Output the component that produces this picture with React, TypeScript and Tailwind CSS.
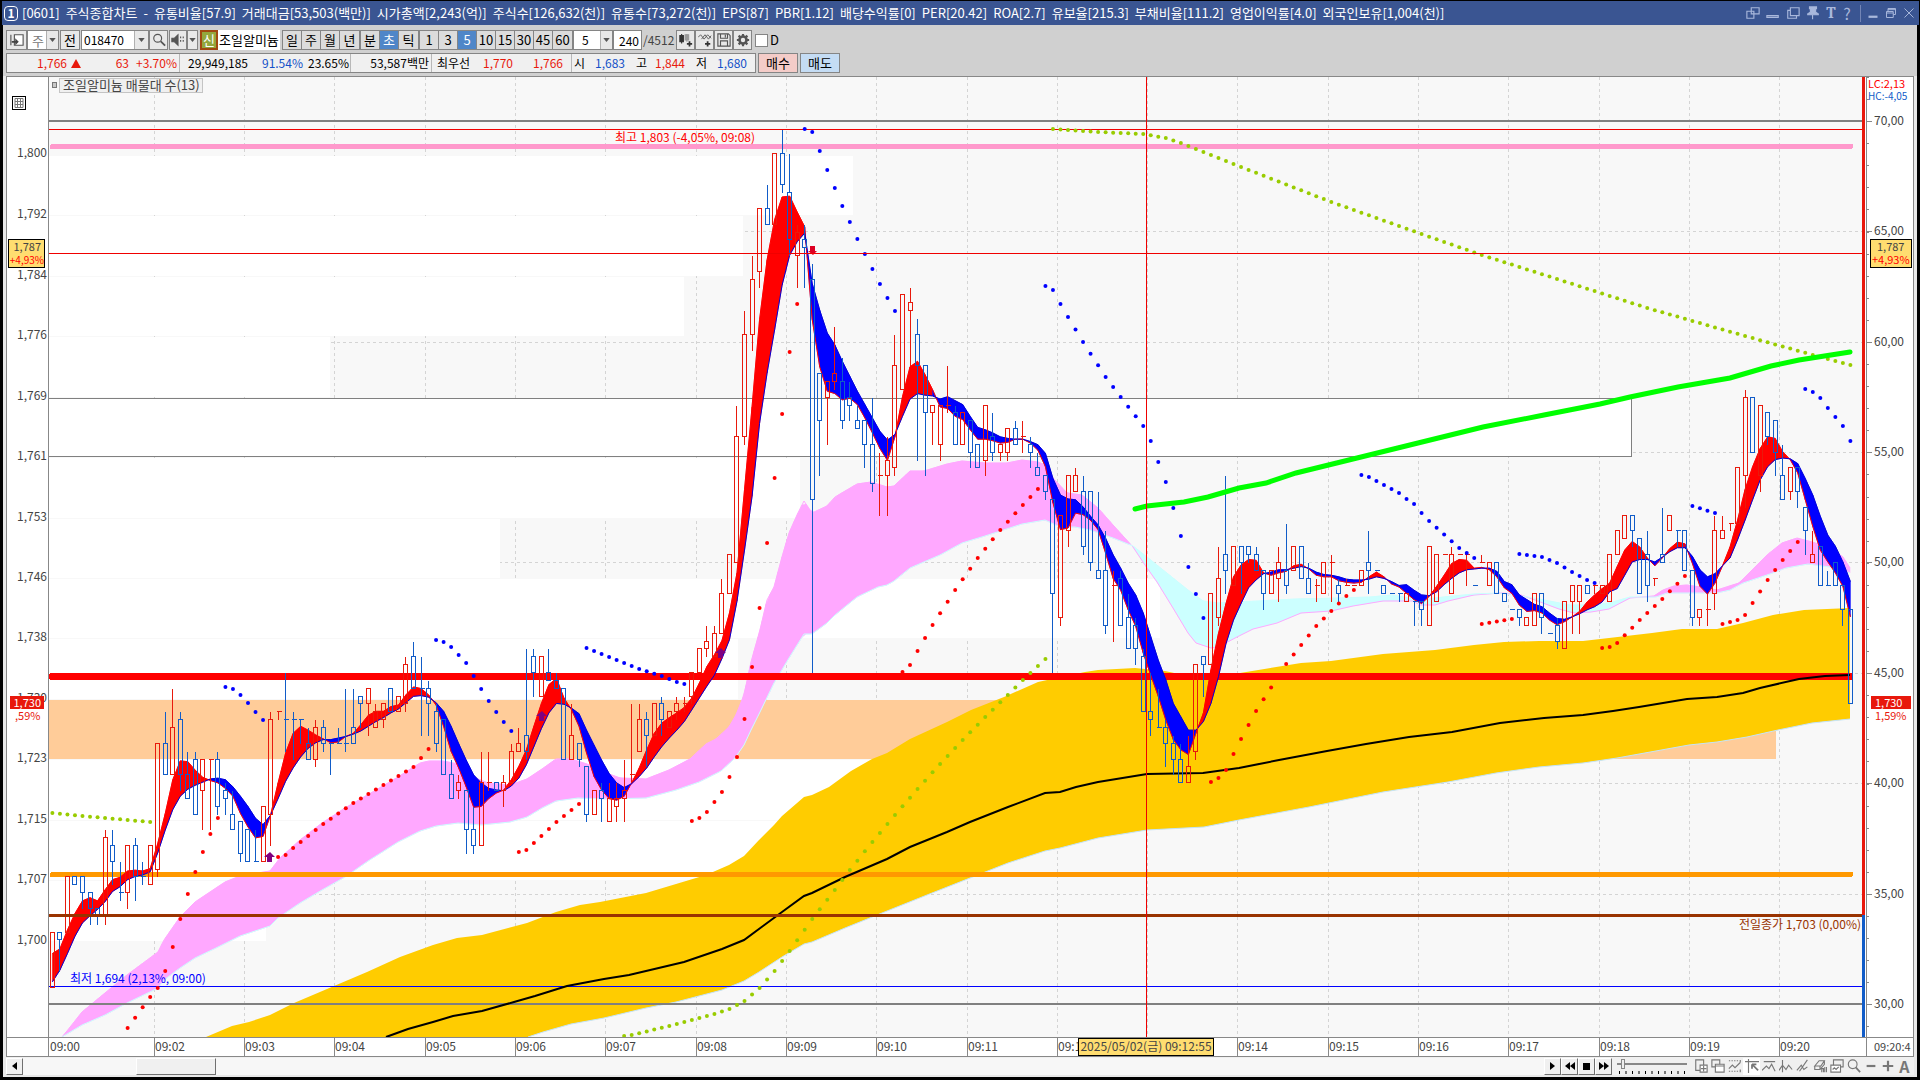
import type { ReactNode } from "react";

type Pt = [number, number];
type Candle = ["r" | "b", number, number, number, number];

const STEP = 7.523;
const X0 = 52.4;
const cx = (i: number) => X0 + i * STEP;
const py = (price: number) => 129.3 + (1803 - price) * 7.865;

// [colour, high, body top, body bottom, low], one bar every 5 seconds
const candles: Candle[] = [
    ["r", 1701, 1701, 1694, 1694], ["b", 1701, 1701, 1700, 1696], ["r", 1708, 1708, 1701, 1701], ["b", 1708, 1708, 1707, 1707],
    ["b", 1708, 1708, 1706, 1704], ["b", 1706, 1706, 1704, 1702], ["b", 1704, 1704, 1703, 1702], ["r", 1714, 1713, 1703, 1702],
    ["b", 1714, 1712, 1710, 1707], ["b", 1710, 1706, 1706, 1705], ["r", 1712, 1712, 1706, 1704], ["b", 1713, 1712, 1708, 1705],
    ["b", 1710, 1708, 1708, 1707], ["r", 1712, 1712, 1707, 1707], ["r", 1725, 1725, 1709, 1708], ["b", 1729, 1725, 1721, 1721],
    ["r", 1732, 1727, 1721, 1721], ["b", 1729, 1728, 1721, 1719], ["b", 1724, 1721, 1718, 1718], ["b", 1724, 1723, 1716, 1716],
    ["r", 1723, 1723, 1719, 1714], ["r", 1723, 1723, 1723, 1714], ["b", 1724, 1723, 1717, 1716], ["b", 1720, 1719, 1718, 1716],
    ["b", 1719, 1716, 1714, 1714], ["b", 1715, 1715, 1711, 1710], ["b", 1714, 1714, 1710, 1710], ["b", 1714, 1710, 1710, 1710],
    ["r", 1717, 1717, 1710, 1710], ["r", 1729, 1728, 1716, 1712], ["r", 1729, 1729, 1729, 1728], ["b", 1734, 1728, 1728, 1724],
    ["b", 1729, 1728, 1728, 1723], ["b", 1728, 1728, 1728, 1725], ["b", 1727, 1725, 1723, 1723], ["r", 1728, 1727, 1723, 1722],
    ["b", 1728, 1727, 1725, 1724], ["b", 1725, 1725, 1725, 1721], ["b", 1727, 1725, 1725, 1725], ["b", 1732, 1725, 1725, 1724],
    ["b", 1732, 1727, 1725, 1725], ["b", 1731, 1731, 1730, 1727], ["r", 1732, 1732, 1730, 1726], ["r", 1730, 1729, 1727, 1727],
    ["r", 1730, 1730, 1728, 1727], ["b", 1732, 1732, 1729, 1729], ["r", 1731, 1731, 1729, 1729], ["r", 1736, 1735, 1730, 1729],
    ["b", 1738, 1736, 1732, 1732], ["b", 1736, 1732, 1732, 1726], ["b", 1733, 1732, 1730, 1726], ["b", 1730, 1729, 1725, 1724],
    ["b", 1728, 1728, 1721, 1721], ["b", 1723, 1721, 1718, 1718], ["r", 1721, 1720, 1719, 1718], ["b", 1719, 1719, 1714, 1711],
    ["b", 1717, 1714, 1712, 1711], ["r", 1724, 1720, 1712, 1712], ["r", 1724, 1720, 1720, 1719], ["b", 1720, 1720, 1719, 1719],
    ["r", 1721, 1720, 1719, 1717], ["r", 1725, 1724, 1720, 1720], ["r", 1727, 1725, 1724, 1724], ["b", 1737, 1726, 1724, 1723],
    ["b", 1737, 1736, 1734, 1731], ["r", 1736, 1736, 1731, 1731], ["b", 1737, 1734, 1733, 1733], ["b", 1734, 1733, 1732, 1732],
    ["b", 1732, 1732, 1723, 1723], ["r", 1730, 1726, 1723, 1723], ["b", 1725, 1725, 1723, 1722], ["b", 1722, 1722, 1716, 1715],
    ["r", 1719, 1719, 1716, 1716], ["b", 1720, 1719, 1718, 1715], ["r", 1720, 1718, 1715, 1715], ["r", 1720, 1718, 1717, 1715],
    ["r", 1723, 1719, 1718, 1715], ["r", 1730, 1721, 1721, 1720], ["r", 1730, 1728, 1724, 1724], ["b", 1729, 1728, 1726, 1722],
    ["r", 1730, 1730, 1726, 1726], ["b", 1731, 1730, 1728, 1726], ["r", 1729, 1729, 1727, 1727], ["r", 1731, 1730, 1729, 1728],
    ["r", 1731, 1730, 1730, 1729], ["r", 1734, 1734, 1731, 1730], ["r", 1737, 1737, 1734, 1734], ["r", 1740, 1738, 1737, 1736],
    ["r", 1740, 1739, 1736, 1736], ["r", 1746, 1744, 1739, 1739], ["r", 1749, 1749, 1744, 1744], ["r", 1768, 1764, 1748, 1748],
    ["r", 1780, 1777, 1764, 1763], ["r", 1787, 1784, 1777, 1775], ["r", 1793, 1793, 1785, 1783], ["b", 1796, 1793, 1791, 1791],
    ["r", 1800, 1800, 1791, 1791], ["b", 1803, 1800, 1796, 1795], ["b", 1800, 1795, 1789, 1787], ["r", 1791, 1790, 1787, 1783],
    ["b", 1791, 1789, 1788, 1783], ["b", 1786, 1784, 1756, 1734], ["b", 1772, 1772, 1766, 1759], ["r", 1771, 1771, 1769, 1763],
    ["r", 1778, 1772, 1771, 1770], ["b", 1774, 1771, 1766, 1765], ["b", 1771, 1769, 1768, 1766], ["b", 1768, 1766, 1765, 1765],
    ["b", 1766, 1766, 1763, 1760], ["b", 1769, 1763, 1758, 1757], ["r", 1762, 1759, 1759, 1754], ["r", 1764, 1761, 1759, 1754],
    ["r", 1777, 1773, 1760, 1759], ["r", 1782, 1782, 1770, 1770], ["r", 1783, 1781, 1780, 1773], ["b", 1779, 1777, 1773, 1761],
    ["b", 1773, 1773, 1767, 1759], ["r", 1768, 1768, 1767, 1763], ["r", 1768, 1768, 1763, 1761], ["r", 1773, 1768, 1768, 1767],
    ["b", 1768, 1767, 1763, 1763], ["r", 1767, 1767, 1763, 1763], ["b", 1766, 1766, 1762, 1760], ["b", 1763, 1763, 1760, 1760],
    ["r", 1768, 1768, 1761, 1759], ["b", 1767, 1764, 1762, 1761], ["r", 1763, 1763, 1762, 1761], ["r", 1765, 1765, 1762, 1761],
    ["b", 1766, 1765, 1763, 1763], ["r", 1766, 1764, 1764, 1762], ["b", 1764, 1763, 1762, 1760], ["b", 1762, 1760, 1759, 1759],
    ["b", 1759, 1759, 1757, 1756], ["b", 1756, 1756, 1744, 1734], ["r", 1754, 1754, 1741, 1740], ["r", 1759, 1759, 1752, 1750],
    ["r", 1760, 1759, 1757, 1757], ["b", 1759, 1757, 1750, 1749], ["b", 1757, 1757, 1748, 1747], ["b", 1757, 1747, 1746, 1746],
    ["b", 1752, 1747, 1740, 1739], ["r", 1747, 1745, 1745, 1738], ["b", 1747, 1746, 1740, 1740], ["b", 1744, 1741, 1737, 1737],
    ["b", 1741, 1740, 1737, 1735], ["b", 1737, 1736, 1729, 1729], ["b", 1734, 1729, 1728, 1726], ["b", 1732, 1727, 1727, 1727],
    ["b", 1728, 1727, 1725, 1722], ["b", 1726, 1725, 1723, 1721], ["b", 1725, 1723, 1720, 1720], ["r", 1726, 1722, 1720, 1720],
    ["r", 1735, 1735, 1724, 1723], ["b", 1736, 1736, 1735, 1731], ["r", 1744, 1744, 1735, 1735], ["r", 1750, 1746, 1741, 1740],
    ["b", 1759, 1749, 1747, 1744], ["r", 1750, 1750, 1745, 1745], ["b", 1750, 1750, 1748, 1744], ["b", 1750, 1750, 1749, 1748],
    ["b", 1750, 1749, 1747, 1747], ["b", 1747, 1747, 1744, 1742], ["r", 1747, 1747, 1744, 1744], ["r", 1750, 1748, 1746, 1743],
    ["b", 1753, 1747, 1745, 1744], ["r", 1750, 1750, 1747, 1747], ["b", 1750, 1750, 1746, 1746], ["b", 1748, 1746, 1744, 1744],
    ["r", 1746, 1745, 1745, 1743], ["r", 1748, 1748, 1744, 1744], ["r", 1749, 1748, 1748, 1743], ["b", 1746, 1745, 1744, 1743],
    ["r", 1746, 1745, 1745, 1745], ["r", 1745, 1745, 1745, 1745], ["r", 1747, 1747, 1745, 1745], ["b", 1752, 1748, 1747, 1744],
    ["b", 1747, 1747, 1747, 1747], ["b", 1745, 1745, 1744, 1744], ["b", 1744, 1744, 1744, 1744], ["b", 1744, 1744, 1744, 1743],
    ["r", 1744, 1744, 1743, 1743], ["b", 1743, 1743, 1743, 1740], ["b", 1743, 1743, 1742, 1740], ["r", 1750, 1750, 1740, 1740],
    ["r", 1749, 1749, 1743, 1743], ["r", 1749, 1749, 1749, 1749], ["r", 1750, 1749, 1744, 1744], ["r", 1749, 1749, 1749, 1749],
    ["r", 1749, 1749, 1749, 1745], ["b", 1745, 1745, 1745, 1745], ["r", 1749, 1748, 1748, 1748], ["r", 1748, 1748, 1745, 1745],
    ["b", 1748, 1748, 1744, 1744], ["b", 1744, 1744, 1743, 1743], ["b", 1742, 1742, 1742, 1742], ["b", 1742, 1742, 1741, 1740],
    ["r", 1741, 1741, 1740, 1740], ["r", 1744, 1744, 1740, 1740], ["b", 1744, 1744, 1741, 1739], ["b", 1739, 1739, 1739, 1739],
    ["b", 1741, 1740, 1738, 1737], ["r", 1743, 1743, 1737, 1737], ["r", 1745, 1745, 1743, 1739], ["r", 1745, 1745, 1743, 1739],
    ["b", 1745, 1745, 1744, 1744], ["r", 1745, 1745, 1745, 1744], ["r", 1745, 1745, 1744, 1744], ["r", 1749, 1749, 1743, 1743],
    ["r", 1752, 1752, 1749, 1749], ["r", 1754, 1754, 1751, 1751], ["b", 1754, 1754, 1752, 1750], ["b", 1751, 1751, 1744, 1744],
    ["b", 1752, 1749, 1745, 1743], ["r", 1746, 1746, 1746, 1745], ["b", 1755, 1749, 1748, 1748], ["r", 1754, 1754, 1752, 1752],
    ["b", 1752, 1752, 1752, 1750], ["b", 1752, 1752, 1747, 1747], ["b", 1747, 1747, 1741, 1740], ["r", 1742, 1742, 1741, 1740],
    ["r", 1744, 1742, 1742, 1740], ["r", 1754, 1752, 1744, 1742], ["r", 1754, 1752, 1751, 1751], ["r", 1753, 1753, 1753, 1752],
    ["r", 1760, 1760, 1753, 1753], ["r", 1770, 1769, 1759, 1755], ["b", 1769, 1769, 1762, 1762], ["r", 1768, 1768, 1759, 1757],
    ["b", 1767, 1767, 1764, 1763], ["b", 1766, 1766, 1762, 1759], ["b", 1763, 1759, 1756, 1756], ["r", 1760, 1760, 1757, 1756],
    ["b", 1760, 1760, 1757, 1755], ["b", 1755, 1755, 1752, 1749], ["r", 1752, 1749, 1748, 1748], ["b", 1750, 1750, 1745, 1745],
    ["b", 1747, 1745, 1745, 1745], ["b", 1748, 1748, 1745, 1745], ["b", 1745, 1745, 1742, 1740], ["b", 1742, 1742, 1730, 1730],
];

// moving averages, one value per bar
const fast = [
    1698.2, 1698.8, 1701.2, 1703.3, 1704.9, 1705.3, 1704.9, 1706.3, 1707.6, 1707.9, 1708.7, 1708.8, 1708.7, 1709, 1712.2, 1716,
    1720.3, 1722.7, 1722.6, 1721.5, 1720.6, 1720.2, 1719.9, 1719.2, 1718.2, 1716, 1714.3, 1712.9, 1713.1, 1715.8, 1719.9, 1723.7,
    1726.2, 1727.1, 1726.6, 1726, 1725.5, 1725, 1725.1, 1725.8, 1726.2, 1727.3, 1728.5, 1729, 1729, 1729.6, 1729.8, 1731.1,
    1732.1, 1731.9, 1731.1, 1729.8, 1727.1, 1723.9, 1721.8, 1719.4, 1716.8, 1716.9, 1717.9, 1718.6, 1719, 1720.3, 1722, 1724.1,
    1727.1, 1730, 1732.4, 1733.2, 1730.7, 1729.2, 1727.1, 1723.7, 1720.7, 1719, 1717.9, 1717.7, 1718.2, 1719.9, 1721.8, 1724.1,
    1726.2, 1727.5, 1728.2, 1728.8, 1729.5, 1730.7, 1732.6, 1734.7, 1736.2, 1738, 1741.5, 1746.6, 1757.2, 1767.7, 1778.8, 1786.4,
    1791.5, 1794.4, 1794.5, 1792.5, 1790.6, 1778.8, 1772.8, 1769.7, 1769.4, 1768.6, 1768.8, 1768, 1766.3, 1764.4, 1762.4, 1760.9,
    1763.9, 1769, 1772.8, 1773.5, 1771.8, 1769.9, 1767.7, 1767.5, 1766.5, 1766.1, 1764.8, 1763.6, 1763.6, 1763.4, 1763.1, 1763.2,
    1763.6, 1763.6, 1763.1, 1762.2, 1760.1, 1755.5, 1752.1, 1752.3, 1754.2, 1754, 1753.3, 1752.1, 1749.1, 1745.9, 1744.4, 1741.9,
    1739.8, 1736.4, 1733.6, 1730.9, 1727.9, 1725.4, 1724.1, 1723.5, 1726.2, 1728.8, 1734.3, 1738.9, 1742.7, 1746.1, 1747.6, 1748.3,
    1748.2, 1746.6, 1746.3, 1746.6, 1746.8, 1747.5, 1747.7, 1747.1, 1746.3, 1746.1, 1746.1, 1745.6, 1745.4, 1745.3, 1745.4, 1746.1,
    1746.7, 1746.1, 1745.2, 1744.8, 1744, 1743.2, 1742.7, 1743.6, 1744.9, 1746.3, 1747.8, 1748.3, 1748.2, 1747.2, 1747.3, 1747,
    1746.1, 1744.7, 1744, 1742.5, 1741.7, 1741.8, 1741.5, 1740.6, 1740, 1740.4, 1741, 1741.7, 1742.9, 1743.8, 1744.6, 1745.3,
    1747.4, 1749.5, 1750.6, 1749.9, 1748.5, 1747.5, 1748.5, 1749.7, 1750.5, 1750.3, 1747.8, 1744.9, 1743.9, 1745.3, 1747.5, 1749.9,
    1753.3, 1757.2, 1760.1, 1762.4, 1763.9, 1763.7, 1762, 1761, 1759.3, 1755.9, 1752.5, 1749.5, 1748, 1746.6, 1744.9, 1741,
];
const slow = [
    1694.6, 1696.1, 1698.2, 1700.4, 1702.1, 1703, 1703.8, 1704.8, 1706.1, 1706.7, 1707.6, 1708, 1708.2, 1708.6, 1711, 1713.9,
    1716.5, 1718.2, 1719.1, 1719.6, 1720, 1720.4, 1720.5, 1720.3, 1719.4, 1718.2, 1716.9, 1715.4, 1714.6, 1715.8, 1717.9, 1720.1,
    1721.8, 1723.2, 1724.3, 1725, 1725.4, 1725.4, 1725.6, 1725.8, 1726.1, 1726.5, 1727.1, 1727.7, 1728.2, 1728.8, 1729.3, 1730.1,
    1730.9, 1731, 1730.8, 1730.1, 1729, 1727.1, 1724.9, 1722.8, 1720.9, 1719.9, 1719.2, 1719, 1718.9, 1719.5, 1720.5, 1722.2,
    1724.5, 1726.8, 1728.8, 1730, 1729.9, 1729.4, 1728.7, 1726.6, 1724.7, 1722.8, 1721.1, 1719.9, 1719.3, 1719.8, 1720.7, 1721.8,
    1723.2, 1724.5, 1725.6, 1726.6, 1727.7, 1729.2, 1730.7, 1732.2, 1733.6, 1735.7, 1738.1, 1743, 1749.5, 1756.3, 1765.6, 1772,
    1777.5, 1783.2, 1787, 1788.7, 1789.8, 1783.4, 1780, 1777.1, 1775.6, 1773.5, 1771.6, 1769.7, 1768, 1766.3, 1764.6, 1763.5,
    1764.2, 1766.5, 1768.7, 1769.4, 1769.2, 1769.1, 1768.7, 1769, 1768.5, 1768, 1766.5, 1765.1, 1764.8, 1764.4, 1763.9, 1763.7,
    1763.6, 1763.6, 1763.3, 1762.9, 1761.8, 1758.6, 1756.5, 1756, 1755.9, 1755, 1753.8, 1752.7, 1751, 1748.9, 1747.2, 1745.3,
    1743.8, 1741.5, 1738.5, 1735.5, 1733, 1730, 1728.3, 1726.6, 1726.6, 1727.7, 1730, 1733.4, 1737.6, 1740.6, 1742.7, 1744.7,
    1745.7, 1746.5, 1746.7, 1747, 1747, 1747.2, 1747.4, 1747.2, 1746.7, 1746.4, 1746.3, 1746.1, 1745.8, 1745.7, 1745.7, 1745.8,
    1746.1, 1745.9, 1745.5, 1745, 1745.1, 1744.4, 1743.8, 1743.7, 1744.2, 1745.1, 1745.9, 1746.6, 1747, 1747.1, 1747.2, 1747.2,
    1746.8, 1745.5, 1745.1, 1743.8, 1743.2, 1742.6, 1742.3, 1741.5, 1740.8, 1740.7, 1741, 1741.4, 1741.9, 1742.3, 1742.9, 1744.2,
    1744.6, 1746.3, 1748, 1748.3, 1748.3, 1748, 1748.6, 1749.3, 1749.8, 1749.8, 1748.7, 1747, 1746.1, 1746.5, 1747.5, 1748.5,
    1750.8, 1753.3, 1755.9, 1758.4, 1760.1, 1761, 1761.2, 1761.1, 1760.5, 1758.6, 1756.5, 1753.8, 1751.4, 1750, 1748, 1745.5,
];

const cloudA: Pt[] = [
    [62, 1037], [67, 1031], [82, 1012], [105, 993], [127, 975], [158, 952], [164, 940], [180, 917], [195, 902], [210, 892], [225, 882],
    [240, 876], [270, 871], [280, 858], [300, 840], [322, 823], [345, 808], [376, 790], [398, 777], [420, 763], [429, 761], [443, 761],
    [458, 764], [473, 777], [488, 783], [510, 785], [527, 779], [542, 769], [556, 759], [571, 759], [587, 764], [601, 771], [620, 778],
    [646, 779], [669, 770], [690, 759], [706, 744], [716, 739], [729, 727], [736, 715], [744, 695], [751, 662], [760, 630], [767, 600],
    [774, 587], [782, 557], [789, 533], [797, 515], [804, 501], [812, 513], [827, 506], [835, 497], [857, 484], [871, 482], [887, 487],
    [894, 486], [910, 471], [924, 471], [947, 464], [962, 461], [985, 463], [1007, 463], [1022, 460], [1038, 462], [1045, 465],
    [1053, 478], [1067, 493], [1082, 495], [1098, 508], [1113, 525], [1133, 547], [1145, 565], [1157, 582], [1173, 608], [1188, 633],
    [1196, 643], [1211, 648], [1218, 647], [1237, 637], [1253, 629], [1277, 623], [1301, 613], [1331, 611], [1353, 606], [1383, 601],
    [1413, 601], [1420, 605], [1435, 605], [1448, 601], [1474, 595], [1500, 593], [1518, 594], [1535, 600], [1559, 609], [1574, 613],
    [1591, 612], [1609, 609], [1630, 598], [1654, 596], [1663, 590], [1674, 586], [1687, 585], [1700, 587], [1717, 590], [1739, 583],
    [1752, 570], [1767, 555], [1782, 543], [1797, 538], [1812, 542], [1830, 548], [1843, 557], [1850, 568],
];
const cloudB: Pt[] = [
    [62, 1037], [82, 1025], [105, 1015], [127, 1003], [158, 988], [164, 980], [180, 968], [195, 958], [216, 948], [240, 936], [270, 926],
    [278, 918], [300, 903], [322, 890], [345, 877], [368, 861], [398, 842], [420, 831], [436, 826], [458, 823], [481, 825], [510, 822],
    [527, 817], [542, 808], [556, 801], [578, 798], [604, 799], [646, 798], [676, 790], [699, 782], [721, 771], [735, 758], [744, 745],
    [751, 730], [760, 712], [774, 683], [789, 658], [804, 634], [812, 634], [827, 623], [835, 615], [857, 597], [878, 587], [887, 585],
    [894, 581], [910, 568], [940, 555], [962, 543], [985, 536], [1022, 524], [1045, 520], [1060, 527], [1075, 527], [1090, 530],
    [1113, 538], [1133, 546], [1147, 557], [1173, 578], [1188, 590], [1203, 601], [1218, 603], [1239, 602], [1296, 599], [1340, 598],
    [1370, 597], [1392, 595], [1409, 598], [1426, 599], [1444, 597], [1474, 594], [1500, 593], [1522, 596], [1544, 600], [1570, 605],
    [1596, 605], [1613, 602], [1630, 597], [1656, 597], [1667, 593], [1717, 593], [1730, 590], [1743, 583], [1767, 575], [1786, 568],
    [1808, 564], [1830, 567], [1850, 573],
];
const bandTop: Pt[] = [
    [206, 1037], [232, 1026], [249, 1022], [270, 1015], [294, 1003], [327, 989], [367, 972], [400, 957], [433, 945], [457, 938],
    [482, 935], [527, 923], [556, 912], [580, 905], [600, 902], [646, 893], [676, 884], [706, 875], [729, 865], [744, 856], [759, 840],
    [774, 825], [782, 816], [804, 797], [812, 795], [829, 787], [851, 771], [872, 759], [887, 753], [910, 739], [947, 722], [971, 710],
    [1004, 697], [1038, 682], [1061, 677], [1085, 672], [1098, 670], [1135, 668], [1165, 671], [1188, 676], [1240, 673], [1301, 663],
    [1331, 661], [1383, 654], [1435, 650], [1474, 645], [1504, 642], [1539, 641], [1583, 641], [1609, 638], [1652, 633], [1682, 629],
    [1717, 629], [1743, 623], [1773, 615], [1804, 610], [1850, 608],
];
const bandBottom: Pt[] = [
    [528, 1037], [543, 1032], [571, 1024], [604, 1018], [646, 1008], [676, 1002], [699, 996], [722, 990], [744, 981], [759, 972],
    [782, 957], [804, 944], [812, 942], [845, 928], [887, 911], [927, 895], [970, 878], [1008, 863], [1045, 851], [1060, 848],
    [1098, 838], [1147, 830], [1204, 827], [1239, 820], [1309, 807], [1383, 792], [1448, 782], [1496, 773], [1539, 767], [1583, 763],
    [1617, 758], [1689, 745], [1717, 742], [1747, 737], [1778, 730], [1812, 723], [1850, 719],
];
const bandMid: Pt[] = [
    [386, 1037], [408, 1029], [433, 1022], [453, 1016], [482, 1011], [514, 1002], [535, 996], [567, 986], [604, 979], [629, 975],
    [646, 971], [684, 962], [722, 949], [744, 940], [763, 926], [782, 912], [804, 896], [812, 893], [845, 877], [887, 859], [910, 847],
    [947, 832], [970, 822], [1008, 807], [1045, 793], [1060, 792], [1076, 787], [1098, 782], [1147, 774], [1203, 773], [1239, 768],
    [1279, 760], [1327, 751], [1366, 744], [1409, 737], [1452, 732], [1500, 723], [1544, 718], [1583, 715], [1613, 711], [1639, 707],
    [1687, 699], [1717, 697], [1743, 693], [1760, 688], [1799, 679], [1825, 676], [1850, 675],
];
const greenLine: Pt[] = [
    [1135, 509], [1147, 506], [1184, 502], [1208, 497], [1239, 488], [1266, 483], [1296, 473], [1357, 458], [1418, 443], [1483, 427],
    [1544, 415], [1600, 404], [1630, 397], [1678, 387], [1730, 378], [1771, 366], [1799, 360], [1850, 352],
];

// dotted series: [bar index, y] key points, a dot is drawn on every bar between them
const blueDots: Pt[][] = [
    [[23, 687], [24, 689], [25, 695], [26, 703], [27, 712], [28, 720]],
    [[51, 640], [52, 642], [53, 647], [54, 655], [55, 663], [56, 676], [57, 689], [58, 701], [59, 712], [60, 722], [61, 731]],
    [[71, 648], [73, 654], [78, 669], [81, 676], [83, 682], [84, 684]],
    [[100, 129], [101, 132], [102, 151], [103, 170], [104, 188], [105, 206], [106, 222], [107, 239], [108, 254], [109, 269], [110, 284], [111, 298], [112, 311]],
    [[132, 286], [133, 290], [134, 304], [135, 317], [137, 342], [140, 377], [142, 397], [145, 426], [146, 441], [147, 462], [148, 482], [149, 508], [150, 536], [151, 567], [152, 594], [153, 618]],
    [[174, 475], [175, 477], [176, 481], [179, 493], [180, 499], [181, 504], [182, 513], [183, 521], [187, 548], [188, 553], [189, 558]],
    [[195, 554], [198, 557], [200, 563], [202, 572], [204, 580], [205, 583]],
    [[218, 506], [221, 513]],
    [[233, 389], [234, 392], [235, 398], [236, 408], [237, 417], [238, 426], [239, 441]],
];
const redDots: Pt[][] = [
    [[10, 1028], [13, 997], [14, 988], [15, 971], [16, 947], [17, 919], [18, 894], [19, 872], [20, 852], [21, 834], [22, 818]],
    [[30, 857], [31, 855], [32, 848], [36, 824], [40, 803], [44, 785], [48, 767], [49, 758], [50, 749]],
    [[62, 852], [63, 850], [64, 843], [67, 822], [70, 804]],
    [[85, 821], [86, 818], [87, 812], [88, 802], [89, 792], [90, 777], [91, 757], [92, 719], [93, 667], [94, 608], [95, 543], [96, 478], [97, 414], [98, 352], [99, 304]],
    [[113, 672], [114, 665], [115, 651], [117, 625], [120, 590], [123, 558], [126, 530], [129, 505], [131, 489]],
    [[154, 782], [155, 778], [156, 770], [157, 754], [158, 739], [160, 711], [164, 664], [168, 626], [172, 596], [173, 590]],
    [[190, 624], [194, 619]],
    [[206, 648], [207, 647], [208, 643], [211, 620], [214, 599], [217, 576]],
    [[222, 624], [224, 620], [225, 615], [226, 603], [228, 580], [229, 570], [230, 560], [232, 542]],
];
const oliveDots: Pt[][] = [
    [[0, 813], [4, 816], [13, 822]],
    [[76, 1036], [77, 1035], [82, 1026], [88, 1014], [90, 1009], [92, 1001], [94, 988], [96, 971], [98, 951], [101, 919], [104, 890], [106, 870], [109, 842], [112, 815], [115, 789], [118, 764], [121, 740], [124, 717], [127, 695], [129, 680], [131, 666], [132, 659]],
    [[133, 129], [139, 132], [145, 134], [148, 138], [150, 143], [153, 152], [158, 167], [170, 202], [182, 234], [190, 255], [200, 279], [212, 308], [225, 336], [235, 357], [239, 365]],
];

// volume profile rows: [top, bottom, right edge]
const profile: [number, number, number][] = [
    [156, 215, 853], [216, 276, 743], [277, 336, 684], [337, 397, 330], [458, 518, 800], [519, 578, 500],
    [579, 638, 1160], [639, 699, 738], [760, 820, 1000], [821, 880, 800], [881, 941, 266],
];

const timeTicks: [number, string][] = [
    [154, "09:02"], [244, "09:03"], [334, "09:04"], [425, "09:05"], [515, "09:06"], [605, "09:07"], [696, "09:08"],
    [786, "09:09"], [876, "09:10"], [967, "09:11"], [1057, "09:12"], [1147, ""], [1237, "09:14"], [1328, "09:15"],
    [1418, "09:16"], [1508, "09:17"], [1599, "09:18"], [1689, "09:19"], [1779, "09:20"],
];
const priceTicks: [number, string][] = [
    [152, "1,800"], [213, "1,792"], [274, "1,784"], [334, "1,776"], [395, "1,769"], [455, "1,761"], [516, "1,753"],
    [576, "1,746"], [636, "1,738"], [697, "1,730"], [757, "1,723"], [818, "1,715"], [878, "1,707"], [939, "1,700"],
];
const rightTicks: [number, string][] = [
    [121, "70,00"], [231, "65,00"], [342, "60,00"], [452, "55,00"], [562, "50,00"],
    [673, "45,00"], [783, "40,00"], [894, "35,00"], [1004, "30,00"],
];

function at(points: Pt[], x: number) {
    for (let k = 1; k < points.length; k++) {
        const [x1, y1] = points[k - 1];
        const [x2, y2] = points[k];
        if (x <= x2) return y1 + ((x - x1) / (x2 - x1)) * (y2 - y1);
    }
    return points[points.length - 1][1];
}

const line = (points: Pt[]) => points.map((p) => p.join(",")).join(" ");

// area between two series, split by which one is on top
function ribbon(a: Pt[], b: Pt[]) {
    let up = "";
    let down = "";
    for (let i = 1; i < a.length; i++) {
        const [xa, a1] = a[i - 1];
        const [xb, a2] = a[i];
        const b1 = b[i - 1][1];
        const b2 = b[i][1];
        const d = `M${xa},${a1}L${xb},${a2}L${xb},${b2}L${xa},${b1}Z`;
        if (a1 + a2 <= b1 + b2) up += d;
        else down += d;
    }
    return { up, down };
}

const fastPts: Pt[] = fast.map((p, i) => [cx(i), py(p)]);
const slowPts: Pt[] = slow.map((p, i) => [cx(i), py(p)]);
const maRibbon = ribbon(fastPts, slowPts);

const cloudXs = Array.from({ length: 448 }, (_, k) => 62 + k * 4);
const cloud = ribbon(
    cloudXs.map((x): Pt => [x, at(cloudA, x)]),
    cloudXs.map((x): Pt => [x, at(cloudB, x)]),
);

function Dots({ series, color }: { series: Pt[][]; color: string }) {
    return (
        <g fill={color}>
            {series.map((keys, s) => {
                const from = keys[0][0];
                const count = keys[keys.length - 1][0] - from + 1;
                return Array.from({ length: count }, (_, k) => (
                    <ellipse key={`${s}-${k}`} cx={cx(from + k)} cy={at(keys, from + k)} rx={2} ry={2} />
                ));
            })}
        </g>
    );
}

function Candles() {
    return (
        <g strokeWidth={1} fill="none" shapeRendering="crispEdges">
            {candles.map(([c, high, top, bottom, low], i) => {
                const x = Math.floor(cx(i)) + 0.5;
                const t = Math.round(py(top)) + 0.5;
                const b = Math.round(py(bottom)) + 0.5;
                const h = Math.round(py(high)) + 0.5;
                const l = Math.round(py(low)) + 0.5;
                const body = top === bottom ? `M${x - 2},${t}H${x + 3}` : `M${x - 2},${t}H${x + 2}V${b}H${x - 2}Z`;
                return <path key={i} stroke={c === "r" ? "#e81a0c" : "#115cc8"} d={`M${x},${h}V${t}M${x},${b}V${l}${body}`} />;
            })}
        </g>
    );
}

function Chart() {
    return (
        <svg viewBox="6 76 1908 981" className="block h-auto w-full text-xs" role="img" aria-label="조일알미늄 5초봉 차트">
            <rect x={6} y={76} width={1908} height={981} fill="#fff" />
            <rect x={49} y={77} width={1815} height={960} fill="#f8f8f8" />

            {/* grid */}
            <g stroke="#d4d4d4" strokeDasharray="3 3" shapeRendering="crispEdges">
                {timeTicks.map(([x]) => (
                    <path key={x} d={`M${x + 0.5},77V1037`} />
                ))}
                {rightTicks.map(([y]) => (
                    <path key={y} d={`M49,${y + 0.5}H1864`} />
                ))}
            </g>
            <g shapeRendering="crispEdges">
                {profile.map(([top, bottom, right]) => (
                    <rect key={top} x={49} y={top} width={right - 49} height={bottom - top} fill="#fff" />
                ))}
                <rect x={48.5} y={398.5} width={1583} height={58} fill="#fff" stroke="#808080" />
                <rect x={49} y={700} width={1727} height={59} fill="#ffcc99" />
            </g>

            {/* clouds and envelope */}
            <path d={cloud.up} fill="#ffa8ff" stroke="#ffa8ff" strokeWidth={0.5} />
            <path d={cloud.down} fill="#ccffff" stroke="#ccffff" strokeWidth={0.5} />
            <polyline points={line(cloudA)} fill="none" stroke="#ffa8ff" />
            <polyline points={line(cloudB)} fill="none" stroke="#ccffff" />
            <polygon points={`${line(bandTop)} ${line([...bandBottom].reverse())}`} fill="#ffcc00" />
            <polyline points={line(bandBottom)} fill="none" stroke="#c4e4f8" />

            <g shapeRendering="crispEdges">
                <rect x={49} y={120} width={1815} height={2} fill="#808080" />
                <rect x={49} y={129} width={1815} height={1} fill="#f00000" />
                <rect x={50} y={144} width={1803} height={5} rx={2} fill="#ff99cc" />
                <rect x={49} y={986} width={1815} height={1} fill="#0000ff" />
                <rect x={49} y={1003} width={1815} height={2} fill="#808080" />
                <rect x={50} y={872} width={1803} height={5} rx={2} fill="#ff9900" />
                <rect x={49} y={673} width={1804} height={7} rx={3} fill="#ff0000" />
            </g>

            <path d={maRibbon.up} fill="#ff0000" stroke="#ff0000" strokeWidth={0.5} />
            <path d={maRibbon.down} fill="#0000ff" stroke="#0000ff" strokeWidth={0.5} />
            <polyline points={line(fastPts)} fill="none" stroke="#ff0000" />
            <polyline points={line(slowPts)} fill="none" stroke="#0000d8" />
            <polyline points={line(bandMid)} fill="none" stroke="#000" strokeWidth={2} />
            <Candles />
            <Dots series={blueDots} color="#0000ff" />
            <Dots series={redDots} color="#ff0000" />
            <Dots series={oliveDots} color="#99cc00" />
            <polyline points={line(greenLine)} fill="none" stroke="#00ff00" strokeWidth={5} strokeLinecap="round" />
            <rect x={49} y={914} width={1815} height={3} fill="#993300" />

            {/* trade signals */}
            <g fill="#800080">
                <path d="M270 852l5 5h-3v5h-5v-5h-3z" />
                <path d="M542 711l5 5h-3v5h-5v-5h-3z" />
                <path d="M721 648l5 5h-3v5h-5v-5h-3z" />
            </g>
            <path d="M810 246h5v5h2l-4 4-5-4h2z" fill="#dd0022" />

            <text x={615} y={142} fill="#ff0000">최고 1,803 (-4,05%, 09:08)</text>
            <text x={70} y={983} fill="#0000ff">최저 1,694 (2,13%, 09:00)</text>
            <text x={1861} y={929} textAnchor="end" fill="#993300">전일종가 1,703 (0,00%)</text>

            {/* crosshair */}
            <g fill="#f00000" shapeRendering="crispEdges">
                <rect x={49} y={253} width={1815} height={1} />
                <rect x={1146} y={77} width={1} height={960} />
                <rect x={1862} y={77} width={3} height={838} fill="#e8180c" />
                <rect x={1862} y={915} width={3} height={122} fill="#115cc8" />
            </g>

            {/* legend */}
            <rect x={52.5} y={82.5} width={4} height={5} fill="#c8c8c8" stroke="#777" />
            <rect x={59.5} y={78.5} width={143} height={14} fill="#f0f0f0" stroke="#c4c4c4" />
            <text x={63} y={90} fill="#444" className="text-[13px]">조일알미늄 매물대 수(13)</text>

            {/* left axis */}
            <g fill="#444" textAnchor="end">
                {priceTicks.map(([y, label]) => (
                    <text key={y} x={47} y={y + 5}>{label}</text>
                ))}
            </g>
            <g fill="none" stroke="#000">
                <rect x={12.5} y={96.5} width={13} height={13} />
                <path d="M15 98.500h8v9h-8zM15 101.500h8M15 104.500h8M17.500 98v10M20.500 98v10" stroke="#777" />
            </g>
            <g className="text-[11px]">
                <rect x={8.5} y={239.5} width={36} height={28} fill="#ffdd70" stroke="#000" />
                <text x={41} y={251} textAnchor="end" fill="#444">1,787</text>
                <text x={44} y={264} textAnchor="end" fill="#ff0000" className="text-[10px]">+4,93%</text>
                <rect x={10} y={696} width={34} height={13} fill="#e8180c" />
                <text x={41} y={707} textAnchor="end" fill="#fff">1,730</text>
                <text x={15} y={720} fill="#e8180c">,59%</text>
            </g>

            {/* right axis */}
            <rect x={1866} y={77} width={48} height={980} fill="#fff" />
            <g stroke="#888" shapeRendering="crispEdges">
                {Array.from({ length: 44 }, (_, k) => 77 + 22.08 * k).map((y) => (
                    <path key={y} d={`M1866,${Math.round(y) + 0.5}h3`} />
                ))}
                {rightTicks.map(([y]) => (
                    <path key={y} d={`M1866,${y + 0.5}h6`} />
                ))}
            </g>
            <g fill="#444">
                {rightTicks.map(([y, label]) => (
                    <text key={y} x={1874} y={y + 4}>{label}</text>
                ))}
            </g>
            <g className="text-[11px]">
                <text x={1868} y={88} fill="#ff0000">LC:2,13</text>
                <text x={1868} y={100} fill="#115cc8" className="text-[10px]">HC:-4,05</text>
                <rect x={1870.5} y={239.5} width={41} height={28} fill="#ffdd70" stroke="#000" />
                <text x={1877} y={251} fill="#444">1,787</text>
                <text x={1872} y={264} fill="#ff0000">+4,93%</text>
                <rect x={1871} y={696} width={40} height={13} fill="#e8180c" />
                <text x={1875} y={707} fill="#fff">1,730</text>
                <text x={1875} y={720} fill="#e8180c">1,59%</text>
            </g>

            {/* time axis */}
            <rect x={6} y={1037} width={1908} height={20} fill="#fff" />
            <g fill="#444">
                <text x={50} y={1051}>09:00</text>
                {timeTicks.map(([x, label]) => (
                    <text key={x} x={x + 1} y={1051}>{label}</text>
                ))}
                <text x={1874} y={1051} className="text-[11px]">09:20:4</text>
            </g>
            <rect x={1078.5} y={1038.5} width={135} height={17} fill="#ffdd70" stroke="#000" />
            <text x={1146} y={1051} textAnchor="middle" fill="#444">2025/05/02(금) 09:12:55</text>
            <g stroke="#888" fill="none" shapeRendering="crispEdges">
                {timeTicks.map(([x, label]) => label && <path key={x} d={`M${x + 0.5},1037V1056`} />)}
                <path d="M6,76.500H1914M6.500,76V1057M1913.500,76V1057M48.500,77V1056M1866.500,77V1056M6,1037.500H1914M6,1056.500H1914" />
            </g>
        </svg>
    );
}

function Icon({ children, size = 14, className = "" }: { children: ReactNode; size?: number; className?: string }) {
    return (
        <svg viewBox="0 0 16 16" width={size} height={size} fill="none" stroke="currentColor" strokeWidth={1.3} className={className} aria-hidden="true">
            {children}
        </svg>
    );
}

const toolBtn = "flex h-5 items-center justify-center border border-[#858585] bg-[#e8e8e8] text-[#555]";

function Arrow() {
    return (
        <svg viewBox="0 0 8 5" width={7} height={4} aria-hidden="true">
            <path d="M0 0h8L4 5z" fill="#555" />
        </svg>
    );
}

function Segments({ items, active }: { items: string[]; active?: string }) {
    return (
        <div className="flex h-5 divide-x divide-[#858585] border border-[#858585] bg-[#dcdcdc]">
            {items.map((item) => (
                <button key={item} type="button" aria-pressed={item === active} className={`w-[19px] leading-[18px] ${item === active ? "bg-[#4f86c8] text-white" : "text-black"}`}>
                    {item}
                </button>
            ))}
        </div>
    );
}

const stats = [
    "유통비율[57.9]", "거래대금[53,503(백만)]", "시가총액[2,243(억)]", "주식수[126,632(천)]", "유통수[73,272(천)]", "EPS[87]", "PBR[1.12]",
    "배당수익률[0]", "PER[20.42]", "ROA[2.7]", "유보율[215.3]", "부채비율[111.2]", "영업이익률[4.0]", "외국인보유[1,004(천)]",
];

function TitleBar() {
    return (
        <header className="flex h-6 items-center bg-[#3a5592] pr-1 pl-0.5 text-white">
            <span className="mr-1 flex h-[15px] w-[14px] items-center justify-center rounded-sm border border-white text-xs font-bold">1</span>
            <h1 className="flex flex-1 gap-1.5 overflow-hidden text-[13px] whitespace-nowrap">
                <span>[0601]</span>
                <span>주식종합차트</span>
                <span>-</span>
                {stats.map((stat) => (
                    <span key={stat}>{stat}</span>
                ))}
            </h1>
            <div className="flex items-center gap-1.5 text-[#a9b8dc]">
                <button type="button" aria-label="창 분리"><Icon><path d="M6 2h9v7H6zM1 6h8v8H1z" /></Icon></button>
                <button type="button" aria-label="숨김"><Icon><path d="M1 11h13v2H1z" /></Icon></button>
                <button type="button" aria-label="복사"><Icon><path d="M5 2h10v9H5zM5 5H2v9h10v-3" /></Icon></button>
                <button type="button" aria-label="고정"><Icon><path d="M4 1h8v2h-1v4l3 2v1H2V9l3-2V3H4zM7.500 10v5" fill="currentColor" /></Icon></button>
                <button type="button" className="w-2.5 font-serif text-base leading-4 font-bold">T</button>
                <button type="button" className="w-2.5 text-base leading-4">?</button>
                <span className="ml-0.5 h-[17px] w-px bg-[#7385b5]" />
                <button type="button" aria-label="최소화"><Icon size={12}><path d="M2 13h12" strokeWidth={3} /></Icon></button>
                <button type="button" aria-label="이전 크기"><Icon size={12}><path d="M4 6V2h10v8h-3M2 6h9v8H2zM2 8h9M4 3.500h10" /></Icon></button>
                <button type="button" aria-label="닫기"><Icon size={12}><path d="M2 2l12 12M14 2L2 14" /></Icon></button>
            </div>
        </header>
    );
}

function Toolbar() {
    return (
        <div className="flex h-5 items-center whitespace-nowrap">
            <button type="button" aria-label="메뉴" className={`${toolBtn} w-[21px]`}>
                <Icon><path d="M5 2h10v12H5z" fill="#fff" /><path d="M1 2v12" /><path d="M2 9h4V6l4 4-4 4v-3H2z" fill="#444" stroke="none" /></Icon>
            </button>
            <label className="relative flex h-5 w-8 items-center border border-[#858585] bg-white">
                <select aria-label="구분" className="h-full w-full appearance-none pl-1 text-[#777]">
                    <option>주</option>
                </select>
                <span className="pointer-events-none absolute inset-y-0 right-0 flex w-3 items-center justify-center border-l border-[#b0b0b0] bg-[#e8e8e8]"><Arrow /></span>
            </label>
            <button type="button" className={`${toolBtn} mx-px w-5 text-black`}>전</button>
            <label className="relative flex h-5 w-[68px] border border-[#858585] bg-white">
                <input aria-label="종목코드" defaultValue="018470" className="w-full pl-0.5 text-xs text-black" />
                <span className="pointer-events-none absolute inset-y-0 right-0 flex w-[14px] items-center justify-center border-l border-[#b0b0b0] bg-[#e8e8e8]"><Arrow /></span>
            </label>
            <button type="button" aria-label="검색" className={`${toolBtn} w-[19px]`}>
                <Icon><circle cx={6.500} cy={6} r={4.500} /><path d="M10 9.500l5 5" strokeWidth={2} /></Icon>
            </button>
            <button type="button" aria-label="소리" className={`${toolBtn} ml-px w-[18px]`}>
                <Icon><path d="M1 6h3l4-4v12l-4-4H1z" fill="#555" /><path d="M11 4v2M14 4v2M11 8v2M14 8v2" /></Icon>
            </button>
            <button type="button" aria-label="소리 설정" className={`${toolBtn} w-[11px]`}><Arrow /></button>
            <span className="ml-0.5 flex h-5 w-[18px] items-center justify-center border-2 border-[#a04810] bg-[#93a63c] text-white">신</span>
            <span className="mr-0.5 h-5 w-[62px] bg-white pl-px leading-5 text-black">조일알미늄</span>
            <Segments items={["일", "주", "월", "년"]} />
            <Segments items={["분", "초", "틱"]} active="초" />
            <Segments items={["1", "3", "5", "10", "15", "30", "45", "60"]} active="5" />
            <label className="relative flex h-5 w-10 border border-[#858585] bg-white">
                <select aria-label="주기" className="h-full w-full appearance-none pl-2 text-xs text-black">
                    <option>5</option>
                </select>
                <span className="pointer-events-none absolute inset-y-0 right-0 flex w-3 items-center justify-center border-l border-[#b0b0b0] bg-[#e8e8e8]"><Arrow /></span>
            </label>
            <input aria-label="봉 개수" defaultValue="240" className="h-5 w-[29px] border border-[#858585] bg-white pr-0.5 text-right text-xs text-black" />
            <span className="w-[34px] pl-px text-xs text-[#444]">/4512</span>
            <button type="button" aria-label="봉 추가" className={`${toolBtn} w-[19px]`}>
                <Icon><path d="M1 3h4v7H1zM3 1v11" fill="#333" stroke="#333" /><path d="M7 2h4v6H7zM9 1v9" fill="#999" stroke="#999" /><path d="M9 12.500h6M12 9.500v6" strokeWidth={2} stroke="#333" /></Icon>
            </button>
            <button type="button" aria-label="지표 추가" className={`${toolBtn} w-[19px]`}>
                <Icon><path d="M0 5l3-3 4 5 4-5 4 4M4 7l4-5 4 5 3-4" strokeWidth={1} /><path d="M8 12.500h6M11 9.500v6" strokeWidth={2} stroke="#333" /></Icon>
            </button>
            <button type="button" aria-label="저장" className={`${toolBtn} w-[19px]`}>
                <Icon><path d="M1 1h12l2 2v12H1zM4 1v5h8V1M4 15V9h8v6M9.500 2v3" /></Icon>
            </button>
            <button type="button" aria-label="설정" className={`${toolBtn} w-[19px]`}>
                <Icon><circle cx={8} cy={8} r={4} strokeWidth={3} /><path d="M8 1v3M8 12v3M1 8h3M12 8h3M3 3l2 2M11 11l2 2M13 3l-2 2M5 11l-2 2" strokeWidth={2.500} /></Icon>
            </button>
            <label className="ml-[3px] flex items-center gap-0.5 text-black">
                <input type="checkbox" className="size-[13px] appearance-none border border-[#858585] bg-white" />D
            </label>
        </div>
    );
}

function QuoteBar() {
    return (
        <div className="flex h-5 items-stretch gap-0.5 text-right text-xs whitespace-nowrap">
            <div className="flex w-[750px] items-center divide-x divide-[#b8b8b8] border border-[#858585] bg-[#f0f0f0] leading-[18px] text-black">
                <div className="flex w-[173px] items-center text-[#e81a0c]">
                    <span className="w-[60px]">1,766</span>
                    <svg viewBox="0 0 10 9" width={10} height={9} className="ml-1" aria-label="상승"><path d="M5 0l5 9H0z" fill="#e81a0c" /></svg>
                    <span className="w-12">63</span>
                    <span className="w-12">+3.70%</span>
                </div>
                <div className="flex w-[171px]">
                    <span className="w-[68px]">29,949,185</span>
                    <span className="w-[55px] text-[#1450c8]">91.54%</span>
                    <span className="w-[46px]">23.65%</span>
                </div>
                <div className="w-[81px]"><span className="pr-0.5">53,587백만</span></div>
                <div className="flex w-[140px] text-[#e81a0c]">
                    <span className="w-[38px] text-black">최우선</span>
                    <span className="w-[43px]">1,770</span>
                    <span className="w-[50px]">1,766</span>
                </div>
                <div className="flex">
                    <span className="w-[13px]">시</span>
                    <span className="w-10 text-[#1450c8]">1,683</span>
                    <span className="w-[22px]">고</span>
                    <span className="w-[38px] text-[#e81a0c]">1,844</span>
                    <span className="w-[22px]">저</span>
                    <span className="w-10 text-[#1450c8]">1,680</span>
                </div>
            </div>
            <button type="button" className="w-10 border border-[#858585] bg-[#f4ccc8] text-center text-[13px] text-black">매수</button>
            <button type="button" className="w-10 border border-[#858585] bg-[#c4dcf4] text-center text-[13px] text-black">매도</button>
        </div>
    );
}

const playBtn = "flex h-[17px] w-[17px] items-center justify-center border border-t-white border-l-white border-r-[#707070] border-b-[#707070] bg-[#f0f0f0]";

function Footer() {
    return (
        <footer className="flex h-[18px] items-center bg-[#f0f0f0] pr-px">
            <button type="button" aria-label="왼쪽" className={playBtn}>
                <svg viewBox="0 0 5 8" width={5} height={8}><path d="M5 0v8L0 4z" /></svg>
            </button>
            <div className="flex h-[17px] flex-1 bg-[#f7f7f7] pl-[113px]">
                <div className="h-[17px] w-20 border border-t-white border-l-white border-r-[#707070] border-b-[#707070] bg-[#f0f0f0]" />
            </div>
            <button type="button" aria-label="재생" className={playBtn}><svg viewBox="0 0 5 8" width={5} height={8}><path d="M0 0v8l5-4z" /></svg></button>
            <button type="button" aria-label="뒤로" className={playBtn}><svg viewBox="0 0 10 8" width={10} height={8}><path d="M5 0v8L0 4zM10 0v8L5 4z" /></svg></button>
            <button type="button" aria-label="정지" className={playBtn}><svg viewBox="0 0 8 8" width={7} height={7}><path d="M0 0h8v8H0z" /></svg></button>
            <button type="button" aria-label="앞으로" className={playBtn}><svg viewBox="0 0 10 8" width={10} height={8}><path d="M0 0v8l5-4zM5 0v8l5-4z" /></svg></button>
            <div className="mx-[5px] w-[70px]">
                <input
                    type="range"
                    aria-label="속도"
                    defaultValue={6}
                    className="block h-[10px] w-full appearance-none bg-[linear-gradient(#888,#888)] bg-[length:100%_2px] bg-center bg-no-repeat [&::-webkit-slider-thumb]:h-[10px] [&::-webkit-slider-thumb]:w-1 [&::-webkit-slider-thumb]:appearance-none [&::-webkit-slider-thumb]:border [&::-webkit-slider-thumb]:border-[#888] [&::-webkit-slider-thumb]:bg-[#f0f0f0]"
                />
                <svg viewBox="0 0 70 3" className="mt-0.5 block h-[3px] w-full" aria-hidden="true">
                    <path d="M2.500 0v3M9 0v3M15.500 0v3M22 0v3M28.500 0v3M35 0v3M41.500 0v3M48 0v3M54.500 0v3M61 0v3M67.500 0v3" stroke="#000" />
                </svg>
            </div>
            <div className="flex items-center text-[#777] [&>button]:flex [&>button]:h-[17px] [&>button]:w-[17px] [&>button]:items-center [&>button]:justify-center">
                <button type="button" aria-label="차트 추가"><Icon><path d="M2 1h9v12H2z" /><path d="M7 7h8v8H7zM11 8v6M8 11h6" fill="#fff" /></Icon></button>
                <button type="button" aria-label="차트 복사"><Icon><path d="M1 1h9v8H1z" /><path d="M5 6h10v9H5zM5 8h10" fill="#fff" /></Icon></button>
                <button type="button" aria-label="영역"><Icon><path d="M1 2h12M1 14h12" strokeDasharray="1.500 1.500" /><path d="M1 11l4-4 3 3 6-6M14 1v3M14 12v3" /></Icon></button>
                <button type="button" aria-label="십자선" aria-pressed="true" className="bg-white"><Icon><path d="M4 0v16M0 3h16" /><path d="M8 6l7 7M8 6h5M8 6v5" strokeWidth={2} /></Icon></button>
                <button type="button" aria-label="수평선"><Icon><path d="M2 3h13M0 13l5-5 3 3 3-5 4 8" /></Icon></button>
                <button type="button" aria-label="수직선"><Icon><path d="M4 1v14M0 13l4-6 4 5 3-5 4 5" /></Icon></button>
                <button type="button" aria-label="추세선"><Icon><path d="M4 14L13 1M1 13l5-6 3 5 4-3" /></Icon></button>
                <button type="button" aria-label="전체 지우기"><Icon><path d="M2 8l5-6h6l-4 6zM2 8v4h6V8M8 12l5-6V2M10 15v-4h2v4M13.500 9v6M15.500 9v6" /></Icon></button>
                <button type="button" aria-label="화면 겹치기"><Icon><path d="M4 1h11v8H4z" /><path d="M1 7h11v8H1zM3 12l2-2 2 2 3-3" fill="#fff" /></Icon></button>
                <button type="button" aria-label="확대"><Icon><circle cx={6.500} cy={6} r={5} /><path d="M10 9.500l5 5.500" strokeWidth={2} /></Icon></button>
                <button type="button" aria-label="축소"><Icon><path d="M3 8h10" strokeWidth={2.500} /></Icon></button>
                <button type="button" aria-label="늘리기"><Icon><path d="M2 8h12M8 2v12" strokeWidth={2.500} /></Icon></button>
                <button type="button" className="text-base leading-4 font-bold">A</button>
            </div>
        </footer>
    );
}

export default function App() {
    return (
        <div className="min-h-screen bg-black pt-px pb-[3px] font-['Noto_Sans_CJK_KR',sans-serif] text-[13px]">
            <div className="pr-px pl-0.5">
                <TitleBar />
            </div>
            <div className="mr-[3px] ml-[3px] bg-[#d0d0d0]">
                <div className="flex flex-col gap-[3px] px-[3px] pt-[5px] pb-[3px]">
                    <Toolbar />
                    <QuoteBar />
                </div>
                <div className="bg-[#e8e8e8] px-[3px] pb-0.5">
                    <Chart />
                    <Footer />
                </div>
            </div>
        </div>
    );
}
